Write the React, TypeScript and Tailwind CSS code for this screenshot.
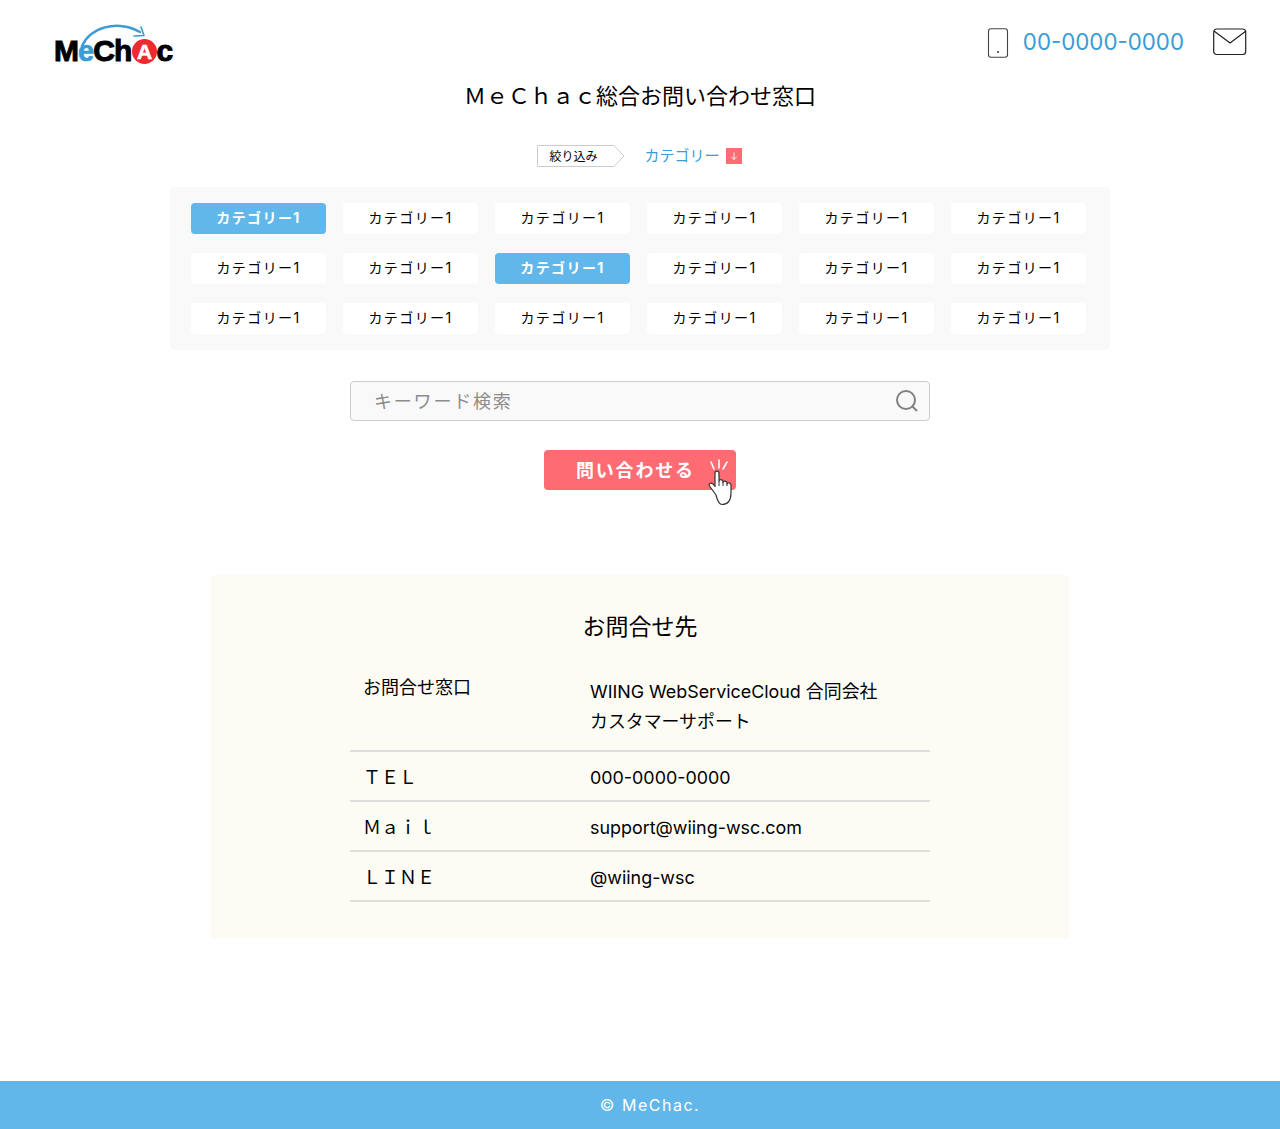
import React from 'react';

const font = { fontFamily: '"Inter", "Noto Sans CJK JP", sans-serif' };

const Logo = () => (
  <div className="relative w-[120px] h-[44px]">
    <svg className="absolute left-0 top-0" width="120" height="44" viewBox="0 0 120 44" fill="none">
      <path d="M28 24C36 6 62-3 86 10" stroke="#3a9bd5" strokeWidth="2.4" strokeLinecap="round" />
      <path d="M80 14L90 13.500L87 5" stroke="#3a9bd5" strokeWidth="1.6" strokeLinecap="round" strokeLinejoin="round" />
    </svg>
    <div className="absolute left-0 top-[14px] flex items-center h-[30px] text-[30px] leading-none font-black tracking-[-0.9px] text-black [font-family:'Liberation_Sans',sans-serif] [-webkit-text-stroke:1px_black]">
      <span>M</span>
      <span className="text-[#3a9bd5] [-webkit-text-stroke:0.7px_#3a9bd5] text-[29px]">e</span>
      <span>Ch</span>
      <span className="flex items-center justify-center w-[25px] h-[25px] rounded-full bg-[#ee2a2e] text-white text-[21px] [-webkit-text-stroke:0.6px_white]">A</span>
      <span>c</span>
    </div>
  </div>
);

const Chip = ({ active }: { active?: boolean }) => (
  <div className={`h-[31px] rounded flex items-center justify-center pb-[2px] text-[14px] tracking-[1.4px] ${active ? 'bg-[#62b7ea] text-white font-bold' : 'bg-white text-black'}`}>
    カテゴリー1
  </div>
);

const Row = ({ label, children }: { label: string; children: React.ReactNode }) => (
  <div className="flex items-center h-[50px] border-b-2 border-[#dedfda]">
    <div className="w-[240px] pl-[13px] pt-[2px] text-[18px]">{label}</div>
    <div className="pt-[4px] text-[17.9px]">{children}</div>
  </div>
);

export default function App() {
  const activeChips = [0, 8];
  return (
    <div className="relative min-h-[1129px] bg-white text-black flex flex-col" style={font}>
      <header className="flex justify-between items-start pl-[54px] pr-[33px] pt-[22px] h-[73px]">
        <Logo />
        <div className="flex items-center gap-[29px] pt-[3px]">
          <div className="flex items-center gap-[14px]">
            <svg width="22" height="30" viewBox="0 0 22 30" fill="none">
              <rect x="1.5" y="0.7" width="19" height="28.6" rx="2.5" stroke="#444" strokeWidth="1.1" />
              <circle cx="11" cy="24" r="1" fill="#333" />
            </svg>
            <span className="pb-[2px] text-[22.3px] text-[#3a9bd5]">00-0000-0000</span>
          </div>
          <svg width="34" height="28" viewBox="0 0 34 28" fill="none" className="-mt-[2px]">
            <rect x="0.7" y="1" width="32" height="25.5" rx="3" stroke="#222" strokeWidth="1.2" />
            <path d="M1 3L17 15L33 3" stroke="#222" strokeWidth="1.2" />
          </svg>
        </div>
      </header>

      <h1 className="text-center text-[22px] leading-[46px] font-normal h-[46px]">ＭｅＣｈａｃ総合お問い合わせ窓口</h1>

      <div className="flex justify-center items-center mt-[24px] h-[26px]">
        <div className="relative w-[88px] h-[22px] mr-[19px]">
          <svg className="absolute inset-0" width="88" height="22" viewBox="0 0 88 22" fill="none">
            <path d="M0.5 0.5H77L87 11L77 21.5H0.5Z" fill="white" stroke="#ccc" />
          </svg>
          <span className="absolute left-[12px] top-[1px] leading-[22px] text-[12px]">絞り込み</span>
        </div>
        <span className="text-[15px] text-[#3a9bd5]">カテゴリー</span>
        <span className="ml-[6px] mr-[1px] w-[16px] h-[16px] bg-[#ff6b72] flex items-center justify-center">
          <svg width="10" height="10" viewBox="0 0 10 10" fill="none">
            <path d="M5 1.5V8.5M2.2 5.7L5 8.5L7.8 5.7" stroke="white" strokeWidth="0.9" />
          </svg>
        </span>
      </div>

      <section className="self-center w-[940px] h-[163px] mt-[18px] bg-[#f9f9f9] rounded pl-[21px] pt-[16px]">
        <div className="grid grid-cols-[repeat(6,135px)] gap-x-[17px] gap-y-[19px]">
          {Array.from({ length: 18 }).map((_, i) => (
            <Chip key={i} active={activeChips.includes(i)} />
          ))}
        </div>
      </section>

      <div className="self-center w-[580px] h-[40px] mt-[31px] bg-[#f9f9f9] border border-[#ccc] rounded flex items-center justify-between pl-[23px] pr-[10px]">
        <span className="text-[18px] tracking-[1.8px] text-[#8c8c8c]">キーワード検索</span>
        <svg width="24" height="24" viewBox="0 0 24 24" fill="none">
          <circle cx="11" cy="11" r="9" stroke="#808080" strokeWidth="2" />
          <path d="M17.5 17.5L22 22" stroke="#808080" strokeWidth="2" />
        </svg>
      </div>

      <div className="relative self-center w-[192px] h-[40px] mt-[29px] bg-[#ff6b72] rounded flex items-center pl-[32px] text-white text-[18px] font-bold tracking-[1.8px]">
        問い合わせる
        <svg className="absolute left-[162px] top-[9px]" width="30" height="48" viewBox="0 0 30 48" fill="none">
          <path d="M5 3L8 10M13 1V9M21 3L17 10" stroke="white" strokeWidth="1.6" strokeLinecap="round" />
          <path d="M10 36L3.5 27C2 25 5 23 7 25L9 27.5V14C9 11.5 13 11.5 13 14V22C13 20 17 20 17 22.5V23.5C17 21.5 21 21.5 21 24V25C21 23 25 23.5 25 26V34C25 41 22 45.5 16 45.5C13 45.5 11.5 42 10 36Z" fill="white" stroke="#333" strokeWidth="1.2" strokeLinejoin="round" />
          <path d="M13 22V27M17 23V27M21 24.5V27" stroke="#333" strokeWidth="1" />
        </svg>
      </div>

      <section className="self-center w-[860px] h-[363px] mt-[85px] bg-[#fcfcf5] rounded pt-[33px] flex flex-col items-center">
        <h2 className="text-[23px] font-normal leading-[36px] mt-[1px]">お問合せ先</h2>
        <div className="w-[580px] mt-[17px]">
          <div className="flex h-[90px] border-b-2 border-[#dedfda] pt-[10px]">
            <div className="w-[240px] pl-[13px] text-[18px] leading-[27px] pt-[2px]">お問合せ窓口</div>
            <div className="text-[17.9px] leading-[30px] pt-[5px]">WIING WebServiceCloud 合同会社<br />カスタマーサポート</div>
          </div>
          <Row label="ＴＥＬ">000-0000-0000</Row>
          <Row label="Ｍａｉｌ">support@wiing-wsc.com</Row>
          <Row label="ＬＩＮＥ">@wiing-wsc</Row>
        </div>
      </section>

      <footer className="mt-auto h-[48px] bg-[#62b7ea] text-white flex items-center justify-center pl-[20px] text-[16px] tracking-[1.5px]">
        © MeChac.
      </footer>
    </div>
  );
}
